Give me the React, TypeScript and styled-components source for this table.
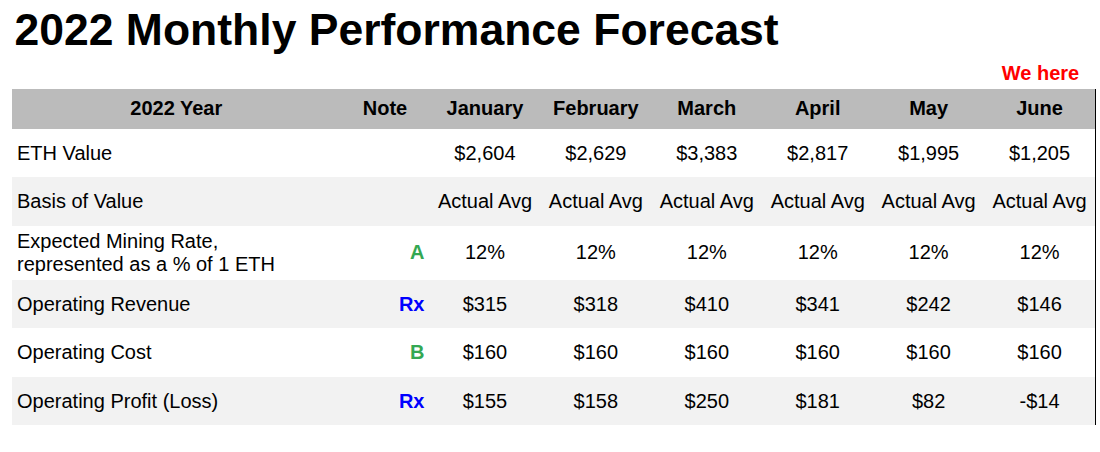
import React from "react";
import styled, { createGlobalStyle } from "styled-components";

const GlobalStyle = createGlobalStyle`
  html, body { margin: 0; padding: 0; background: #ffffff; }
  body { font-family: "Liberation Sans", Arial, sans-serif; color: #000; }
`;

const Page = styled.div`
  padding: 3.5px 0 0 12px;
  width: 1084px;
`;

const Title = styled.h1`
  margin: 0;
  padding-left: 2.5px;
  font-size: 44.5px;
  font-weight: 700;
  line-height: 52px;
`;

const COLS = "328.5px 89px repeat(6, 1fr)";

const MarkerRow = styled.div`
  display: grid;
  grid-template-columns: ${COLS};
  margin-top: 6px;
  padding-bottom: 4.4px;
`;

const Marker = styled.div`
  grid-column: 8;
  text-align: center;
  color: #ff0000;
  font-weight: 700;
  font-size: 20px;
  line-height: 23px;
`;

const Table = styled.div`
  border-right: 1.5px solid #000;
`;

const Row = styled.div<{ $head?: boolean; $shade?: boolean }>`
  display: grid;
  grid-template-columns: ${COLS};
  align-items: center;
  min-height: ${(p) => (p.$head ? "40px" : "48.5px")};
  padding: ${(p) => (p.$head ? "0" : "4px 0")};
  box-sizing: border-box;
  background: ${(p) => (p.$head ? "#bbbbbb" : p.$shade ? "#f2f2f2" : "#ffffff")};
  font-weight: ${(p) => (p.$head ? 700 : 400)};
  font-size: 20px;
  line-height: 23px;
`;

const Label = styled.div<{ $center?: boolean }>`
  padding: 0 5px;
  text-align: ${(p) => (p.$center ? "center" : "left")};
`;

const NoteCell = styled.div<{ $color?: string; $center?: boolean }>`
  padding: 0 5px;
  text-align: ${(p) => (p.$center ? "center" : "right")};
  font-weight: 700;
  color: ${(p) => p.$color || "#000"};
`;

const Cell = styled.div`
  text-align: center;
  white-space: nowrap;
`;

const GREEN = "#34a853";
const BLUE = "#0000ff";

const months = ["January", "February", "March", "April", "May", "June"];

type RowData = {
  label: React.ReactNode;
  note?: string;
  noteColor?: string;
  values: string[];
};

const rows: RowData[] = [
  { label: "ETH Value", values: ["$2,604", "$2,629", "$3,383", "$2,817", "$1,995", "$1,205"] },
  { label: "Basis of Value", values: Array(6).fill("Actual Avg") },
  {
    label: (
      <>
        Expected Mining Rate,
        <br />
        represented as a % of 1 ETH
      </>
    ),
    note: "A",
    noteColor: GREEN,
    values: Array(6).fill("12%"),
  },
  { label: "Operating Revenue", note: "Rx", noteColor: BLUE, values: ["$315", "$318", "$410", "$341", "$242", "$146"] },
  { label: "Operating Cost", note: "B", noteColor: GREEN, values: Array(6).fill("$160") },
  { label: "Operating Profit (Loss)", note: "Rx", noteColor: BLUE, values: ["$155", "$158", "$250", "$181", "$82", "-$14"] },
];

export default function App() {
  return (
    <>
      <GlobalStyle />
      <Page>
        <Title>2022 Monthly Performance Forecast</Title>
        <MarkerRow>
          <Marker>We here</Marker>
        </MarkerRow>
        <Table>
          <Row $head>
            <Label $center>2022 Year</Label>
            <NoteCell $center>Note</NoteCell>
            {months.map((m) => (
              <Cell key={m}>{m}</Cell>
            ))}
          </Row>
          {rows.map((r, i) => (
            <Row key={i} $shade={i % 2 === 1}>
              <Label>{r.label}</Label>
              <NoteCell $color={r.noteColor}>{r.note ?? ""}</NoteCell>
              {r.values.map((v, j) => (
                <Cell key={j}>{v}</Cell>
              ))}
            </Row>
          ))}
        </Table>
      </Page>
    </>
  );
}
